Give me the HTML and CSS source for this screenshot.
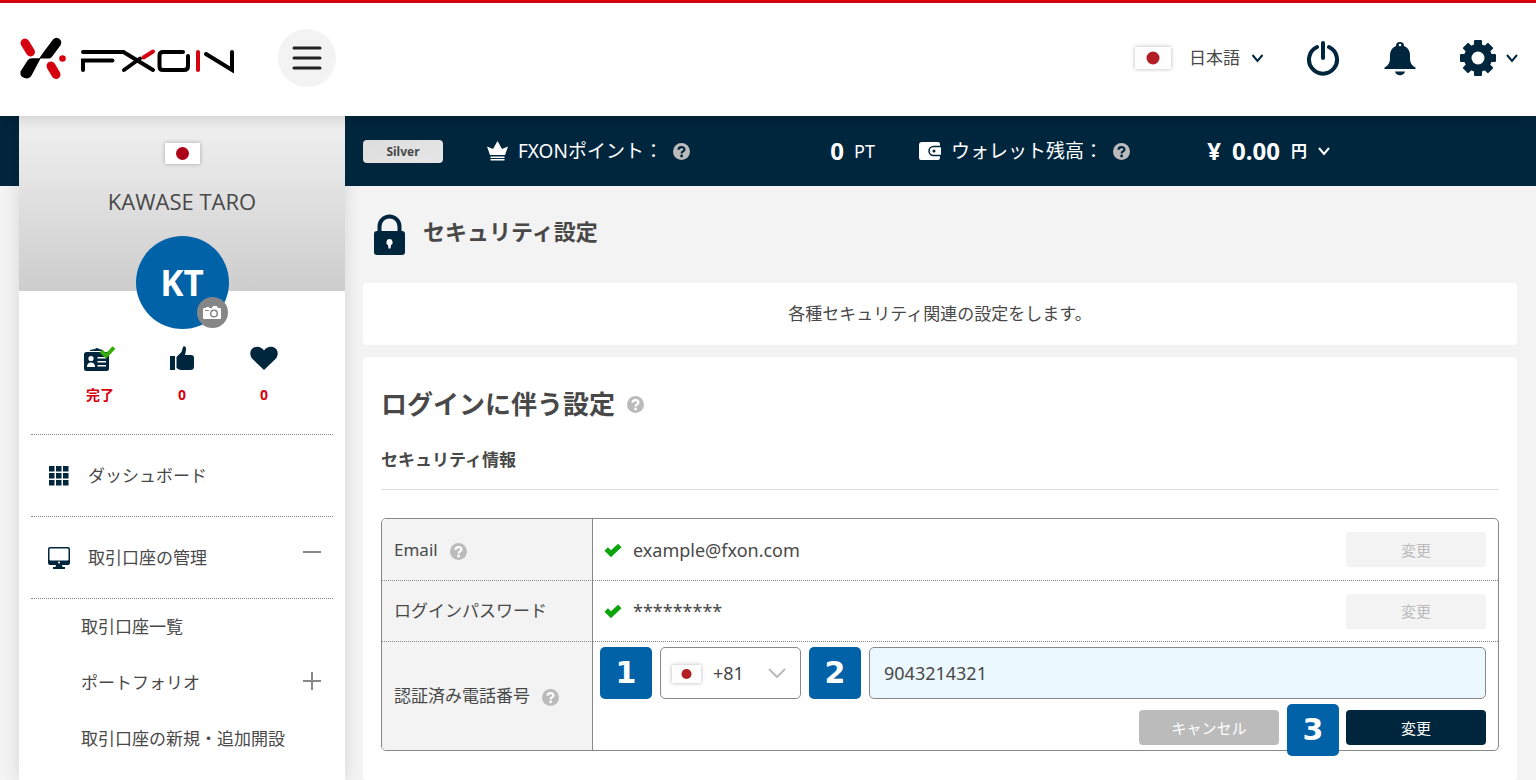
FILE: index.html
```html
<!DOCTYPE html>
<html lang="ja">
<head>
<meta charset="utf-8">
<title>セキュリティ設定 | FXON</title>
<link rel="stylesheet" href="styles.css">
</head>
<body>
<svg class="sprite" aria-hidden="true">
  <symbol id="chevron" viewBox="0 0 12 10"><path d="M1 2l5 6 5-6" fill="none" stroke="currentColor" stroke-width="2"/></symbol>
  <symbol id="help" viewBox="0 0 17 17"><circle cx="8.500" cy="8.500" r="8.500" fill="currentColor"/><path d="M5.500 6.700C5.500 3.300 11.500 3.200 11.500 6.400c0 2.100-2.900 2-2.900 4" fill="none" stroke="var(--help-mark)" stroke-width="2.200"/><circle cx="8.600" cy="13" r="1.400" fill="var(--help-mark)"/></symbol>
  <symbol id="check" viewBox="0 0 18 14"><path d="M2.200 6l4.800 4.700L15.800 2.500" fill="none" stroke="currentColor" stroke-width="5"/></symbol>
</svg>

<header class="header">
  <a class="logo" href="#" aria-label="FXON">
    <svg width="218" height="46" viewBox="0 0 218 46" fill="none" stroke-linecap="round">
      <path d="M7 8l5.500 9M33 31l5 8.500" stroke="#d7000f" stroke-width="9"/>
      <path d="M35.200 4.300q2.800-2.800 6-.500t1.500 6.200L33.800 22q-1.300 1.500-3.500 1.500H22.500L13.800 40q-2.500 4.500-7.300 3t-4-6.500L9.500 25.500Q11 23.200 14 23.200h7.300L26 16.500z" fill="#000"/>
      <circle cx="44.500" cy="23.500" r="3.300" fill="#d7000f"/>
      <path d="M65 17h40.500L135 35M65 35V25.500h29.500M106 35l16-11.500" stroke="#000" stroke-width="4"/>
      <path d="M125.500 22.500L135 16.500" stroke="#d7000f" stroke-width="4"/>
      <path d="M165 17h-20q-3.500 0-3.500 3.500v11q0 3.500 3.500 3.500h21q4 0 4-4V21" stroke="#000" stroke-width="4"/>
      <path d="M180 17v18" stroke="#d7000f" stroke-width="4"/>
      <path d="M188 19l26 16V17" stroke="#000" stroke-width="4"/>
    </svg>
  </a>
  <button class="menu-button" type="button" aria-label="メニュー">
    <svg width="30" height="26" viewBox="0 0 30 26" stroke="#222" stroke-width="3" stroke-linecap="round"><path d="M2 3h26M2 13h26M2 23h26"/></svg>
  </button>
  <nav class="tools" aria-label="ツール">
    <button class="lang" type="button">
      <svg class="flag" width="36" height="22" viewBox="0 0 36 22"><rect width="36" height="22" fill="#fff"/><circle cx="18" cy="11" r="6.500" fill="#b11e23"/></svg>
      <span>日本語</span>
      <svg class="chevron" width="13" height="10"><use href="#chevron"/></svg>
    </button>
    <button type="button" aria-label="ログアウト">
      <svg width="34" height="36" viewBox="0 0 34 36" fill="none" stroke="#00263e" stroke-width="4" stroke-linecap="round"><path d="M17 3v15M11 7a14 14 0 1 0 12 0"/></svg>
    </button>
    <button type="button" aria-label="お知らせ">
      <svg width="32" height="36" viewBox="0 0 32 36" fill="#00263e"><path d="M12 6a4 4 0 1 1 8 0c4 1.500 6 5 6 9.500V18c0 5 2 7.500 5.500 9.500V29h-31v-1.500C4 25.500 6 23 6 18v-2.500C6 11 8 7.500 12 6zM11 31.500h10c-1 5-9 5-10 0z"/><circle cx="16" cy="5" r="1.300" fill="#fff"/></svg>
    </button>
    <button class="settings" type="button" aria-label="設定">
      <svg width="36" height="36" viewBox="-18 -18 36 36"><g fill="#00263e"><circle r="14"/><g id="teeth"><rect x="-4" y="-18" width="8" height="36" rx="1"/><rect x="-18" y="-4" width="36" height="8" rx="1"/></g><use href="#teeth" transform="rotate(45)"/></g><circle r="6.500" fill="#fff"/></svg>
      <svg class="chevron" width="12" height="10"><use href="#chevron"/></svg>
    </button>
  </nav>
</header>

<div class="layout">
  <aside class="sidebar">
    <div class="profile">
      <svg class="flag" width="35" height="21" viewBox="0 0 35 21"><rect width="35" height="21" fill="#fff"/><circle cx="17.500" cy="10.500" r="6.500" fill="#ac0018"/></svg>
      <p class="user-name">KAWASE TARO</p>
      <div class="avatar">KT
        <button class="camera" type="button" aria-label="写真を変更">
          <svg width="18" height="14" viewBox="0 0 18 14"><path d="M1 2h2V1h3v1h3l1-2h4l1 2h2q1 0 1 1v9q0 1-1 1H1q-1 0-1-1V3q0-1 1-1z" fill="#fff"/><circle cx="11" cy="7.500" r="3.300" fill="none" stroke="#868686" stroke-width="1.500"/><path d="M2 4.500h4" stroke="#868686"/></svg>
        </button>
      </div>
    </div>
    <ul class="stats">
      <li>
        <svg width="32" height="26" viewBox="0 0 32 26"><path d="M2.500 6h20Q25 6 25 8.500v14q0 2.500-2.500 2.500h-20Q0 25 0 22.500v-14Q0 6 2.500 6zM6 4l5-1q2-2 4 0l4 1v1H6z" fill="#00263e"/><circle cx="7" cy="12.500" r="2.600" fill="#fff"/><path d="M3 21q0-4.500 4-4.500t4 4.500zM13.500 11h8.500v1.500h-8.500zm0 4h8.500v1.500h-8.500zm0 4h8.500v1.500h-8.500z" fill="#fff"/><path d="M17 5l5 5 8-8.500" fill="none" stroke="#35ac0a" stroke-width="4"/></svg>
        <span>完了</span>
      </li>
      <li>
        <svg width="24" height="26" viewBox="0 0 24 26" fill="#00263e"><path d="M0 10h5v14H0zM6.500 11l5-5 1.500-5c.500-1.500 3-1 3 1.500 0 2.500-.500 4-1 6.500h6q3 0 3 3v8.500q0 3.500-3.500 3.500H11q-2 0-4.500-2z"/></svg>
        <span>0</span>
      </li>
      <li>
        <svg width="28" height="26" viewBox="0 0 28 26" fill="#00263e"><path d="M14 24L2.500 13C-1 9 0 4 3 2s8-2 11 2.500C17 0 22 0 25 2s4 7 .500 11z"/></svg>
        <span>0</span>
      </li>
    </ul>
    <nav class="side-nav" aria-label="メインメニュー">
      <a class="nav-item" href="#">
        <svg width="22" height="22" viewBox="0 0 22 22" fill="#00263e"><path d="M1 1h5.500v5.500H1zM8 1h5.500v5.500H8zM15 1h5.500v5.500H15zM1 8h5.500v5.500H1zM8 8h5.500v5.500H8zM15 8h5.500v5.500H15zM1 15h5.500v5.500H1zM8 15h5.500v5.500H8zM15 15h5.500v5.500H15z"/></svg>
        <span>ダッシュボード</span>
      </a>
      <a class="nav-item" href="#">
        <svg width="22" height="24" viewBox="0 0 22 24"><path d="M2 1h18q2 0 2 2v14q0 2-2 2h-6l.500 2H17v2H5v-2h2.500L8 19H2q-2 0-2-2V3q0-2 2-2z" fill="#00263e"/><rect x="1.500" y="2.500" width="19" height="12" rx="1" fill="#fff"/><circle cx="11" cy="16.500" r="1" fill="#fff"/></svg>
        <span>取引口座の管理</span>
        <svg class="toggle" width="20" height="24" viewBox="0 0 20 24" stroke="#888" stroke-width="2"><path d="M1 6h18"/></svg>
      </a>
      <div class="sub-nav">
        <a href="#">取引口座一覧</a>
        <a href="#">ポートフォリオ
          <svg class="toggle" width="20" height="24" viewBox="0 0 20 24" stroke="#888" stroke-width="2"><path d="M1 10h18M10 1v18"/></svg>
        </a>
        <a href="#">取引口座の新規・追加開設</a>
      </div>
    </nav>
  </aside>

  <div class="content">
    <div class="status-bar">
      <span class="rank">Silver</span>
      <div class="points">
        <svg width="21" height="20" viewBox="0 0 21 20" fill="#fff"><path d="M3 14L0 5.500l6 2.500L10.500 0 15 8l6-2.500L18 14zM3.500 15.500h14V17h-14zm0 2.500h14v1.500h-14z"/></svg>
        <span>FXONポイント：</span>
        <svg class="help" width="17" height="17"><use href="#help"/></svg>
        <strong>0</strong><span class="unit">PT</span>
      </div>
      <div class="wallet">
        <svg width="22" height="18" viewBox="0 0 22 18"><path d="M3 0h16q2 0 2 2v14q0 2-2 2H2q-2 0-2-2V3q0-3 3-3z" fill="#fff"/><path d="M22 4.500h-7.500a4.500 4.500 0 0 0 0 9H22" fill="#fff" stroke="#00263e" stroke-width="1.500"/><circle cx="15" cy="9" r="1.500" fill="#00263e"/></svg>
        <span>ウォレット残高：</span>
        <svg class="help" width="17" height="17"><use href="#help"/></svg>
        <button class="balance" type="button"><span class="amount">¥</span><span class="amount">0.00</span><span class="currency">円</span><svg width="12" height="10"><use href="#chevron"/></svg></button>
      </div>
    </div>

    <main class="main">
      <h1 class="page-title">
        <svg width="31" height="41" viewBox="0 0 31 41"><path d="M5.500 18V12.500a10 10 0 0 1 20 0V18" fill="none" stroke="#00263e" stroke-width="4"/><rect y="17" width="31" height="24" rx="3" fill="#00263e"/><path d="M15.500 25a3.200 3.200 0 0 1 1.500 6l-.500 3.500h-2L14 31a3.200 3.200 0 0 1 1.500-6z" fill="#fff"/></svg>
        <span>セキュリティ設定</span>
      </h1>
      <p class="card lead">各種セキュリティ関連の設定をします。</p>
      <section class="card settings-card">
        <h2>ログインに伴う設定<svg class="help" width="17" height="17"><use href="#help"/></svg></h2>
        <h3>セキュリティ情報</h3>
        <table class="info">
          <tr>
            <th scope="row">Email<svg class="help" width="17" height="17"><use href="#help"/></svg></th>
            <td><div class="value"><svg class="ok" width="18" height="14"><use href="#check"/></svg><span>example@fxon.com</span><button class="btn btn-disabled" type="button" disabled>変更</button></div></td>
          </tr>
          <tr>
            <th scope="row">ログインパスワード</th>
            <td><div class="value"><svg class="ok" width="18" height="14"><use href="#check"/></svg><span>*********</span><button class="btn btn-disabled" type="button" disabled>変更</button></div></td>
          </tr>
          <tr class="phone-row">
            <th scope="row">認証済み電話番号<svg class="help" width="17" height="17"><use href="#help"/></svg></th>
            <td>
              <div class="phone-fields">
                <span class="step">1</span>
                <div class="country">
                  <svg class="flag" width="29" height="18" viewBox="0 0 29 18"><rect width="29" height="18" fill="#fff"/><circle cx="14.500" cy="9" r="5" fill="#b11e23"/></svg>
                  <select aria-label="国番号"><option>+81</option></select>
                  <svg class="arrow" width="18" height="10" viewBox="0 0 18 10" fill="none" stroke="#bbb" stroke-width="2"><path d="M1 1l8 8 8-8"/></svg>
                </div>
                <span class="step">2</span>
                <input type="text" aria-label="電話番号" value="9043214321">
              </div>
              <div class="actions">
                <button class="btn btn-cancel" type="button">キャンセル</button>
                <div class="submit"><span class="step">3</span><button class="btn btn-primary" type="button">変更</button></div>
              </div>
            </td>
          </tr>
        </table>
      </section>
    </main>
  </div>
</div>
</body>
</html>
```
FILE: styles.css
```css
* { box-sizing: border-box; margin: 0; padding: 0; }

body {
  --navy: #00263e;
  --blue: #0262a8;
  --help-mark: #fff;
  display: flex;
  flex-direction: column;
  min-height: 100vh;
  background: #f3f3f3;
  color: #484848;
  font: 17px/24px "Noto Sans", "Noto Sans CJK JP", sans-serif;
}

svg { display: block; flex: none; }
button, input, select { font: inherit; color: inherit; }
button { border: 0; background: none; cursor: pointer; }
a { color: inherit; text-decoration: none; }
ul { list-style: none; }

.sprite { position: absolute; width: 0; height: 0; }
.flag { box-shadow: 0 0 4px rgba(0, 0, 0, .3); }
.help { color: #bbb; }

/* Header */
.header {
  position: relative;
  z-index: 1;
  display: flex;
  align-items: center;
  height: 116px;
  padding: 0 18px 3px;
  border-top: 3px solid #d7000f;
  background: #fff;
  box-shadow: 0 0 16px rgba(0, 0, 0, .2);
}

.menu-button {
  display: grid;
  place-items: center;
  width: 58px;
  height: 58px;
  margin-left: 42px;
  border-radius: 50%;
  background: #f3f3f3;
}

.tools { display: flex; align-items: center; gap: 44px; margin-left: auto; color: var(--navy); }
.lang, .settings { display: flex; align-items: center; }
.lang { margin-right: -2px; color: #484848; }
.lang span { margin: 0 11px 0 18px; }
.settings { gap: 10px; }
.chevron { color: var(--navy); }

/* Page columns */
.layout {
  display: grid;
  grid-template-columns: 326px 1fr;
  flex: 1;
  padding-left: 19px;
  background: linear-gradient(var(--navy) 70px, #f3f3f3 70px);
}

/* Sidebar */
.sidebar { background: #fff; box-shadow: 0 0 16px rgba(0, 0, 0, .12); }

.profile {
  display: flex;
  flex-direction: column;
  align-items: center;
  height: 175px;
  padding-top: 27px;
  background: linear-gradient(#f1f1f1, #cdcdcd);
}

.user-name { margin: 25px 0 23px; font: 22px/24px "Open Sans", sans-serif; }

.avatar {
  position: relative;
  flex: none;
  width: 93px;
  height: 93px;
  border-radius: 50%;
  background: var(--blue);
  color: #fff;
  font: bold 35px/94px "Open Sans", sans-serif;
  text-align: center;
}

.camera {
  position: absolute;
  right: 1px;
  bottom: 1px;
  display: grid;
  place-items: center;
  width: 31px;
  height: 31px;
  border-radius: 50%;
  background: #868686;
}

.stats {
  display: grid;
  grid-template-columns: repeat(3, 82px);
  justify-content: center;
  margin: 0 12px;
  padding: 55px 0 27px;
  border-bottom: 1px dotted #888;
}

.stats li {
  display: flex;
  flex-direction: column;
  align-items: center;
  gap: 11px;
  color: #d7000f;
  font-size: 14px;
  font-weight: bold;
}

.side-nav { margin: 0 12px; }

.nav-item {
  display: flex;
  align-items: center;
  gap: 18px;
  min-height: 82px;
  padding: 0 11px 0 17px;
  border-bottom: 1px dotted #888;
}

.toggle { margin-left: auto; }
.sub-nav a { display: flex; align-items: center; min-height: 56px; padding: 0 11px 0 50px; }

/* Status bar */
.status-bar {
  display: flex;
  align-items: center;
  gap: 44px;
  height: 70px;
  padding: 0 18px;
  background: var(--navy);
  color: #fff;
  font-size: 19px;
}

.status-bar .help { --help-mark: var(--navy); }

.rank {
  width: 80px;
  border-radius: 4px;
  background: linear-gradient(160deg, #ddd, #e6e6e6);
  color: #484848;
  font-size: 12px;
  font-weight: bold;
  line-height: 23px;
  text-align: center;
}

.points, .wallet { display: flex; align-items: center; gap: 10px; }
.points { width: 388px; }
.wallet { width: 411px; }
.points strong { margin-left: auto; font-size: 24px; }
.unit { font-size: 18px; }
.balance { display: flex; align-items: center; gap: 11px; margin-left: auto; font-weight: bold; }
.amount { font-size: 24px; }
.currency { font-size: 16px; }

/* Main */
.main { display: flex; flex-direction: column; gap: 12px; min-height: 594px; padding: 28px 19px 0 18px; }

.page-title {
  display: flex;
  gap: 18px;
  margin: 0 0 16px 11px;
  font-size: 22px;
  line-height: 34px;
}

.card { border-radius: 4px; background: #fff; }
.lead { padding: 18px; line-height: 26px; text-align: center; }
.settings-card { flex: 1; padding: 28px 18px; }

h2 { display: flex; align-items: center; gap: 12px; font-size: 26px; line-height: 38px; }
h3 { margin: 22px 0 28px; padding-bottom: 14px; border-bottom: 1px solid #ddd; font-size: 17px; line-height: 30px; }

/* Security table */
.info { width: 100%; border: 1px solid #888; border-radius: 5px; border-spacing: 0; }

.info th {
  width: 211px;
  height: 61px;
  padding-left: 12px;
  border-right: 1px solid #888;
  background: #f3f3f3;
  font-weight: normal;
  text-align: left;
}

.info tr:first-child th { border-top-left-radius: 4px; }
.info tr:last-child th { border-bottom-left-radius: 4px; }
.info tr + tr > * { border-top: 1px dotted #888; }
.info th .help { display: inline-block; margin-left: 12px; vertical-align: -4px; }
.info td { padding: 0 12px 0 11px; }

.value { display: flex; align-items: center; gap: 11px; font-size: 18px; }
.value .btn { margin-left: auto; }
.ok { color: #0ba50b; }

.btn { width: 140px; height: 35px; border-radius: 4px; font-size: 15px; line-height: 20px; }
.btn-disabled { background: #f3f3f3; color: #bbb; }
.btn-cancel { background: #bbb; color: #fff; }
.btn-primary { background: var(--navy); color: #fff; }

.info .phone-row td { padding: 5px 12px 5px 7px; }
.phone-fields { display: flex; gap: 8px; }

.step {
  flex: none;
  width: 52px;
  border-radius: 5px;
  background: var(--blue);
  color: #fff;
  font: bold 30px/52px "DejaVu Sans", sans-serif;
  text-align: center;
}

.country { position: relative; flex: none; width: 141px; }
.country .flag { position: absolute; left: 12px; top: 18px; }
.country .arrow { position: absolute; right: 15px; top: 21px; pointer-events: none; }

.country select, .phone-fields input {
  width: 100%;
  height: 52px;
  border: 1px solid #888;
  border-radius: 5px;
  background: #fff;
  font-size: 18px;
}

.country select { appearance: none; padding-left: 52px; }
.phone-fields input { flex: 1; min-width: 0; padding: 0 14px; background: #ecf8ff; }

.actions { display: flex; justify-content: flex-end; gap: 67px; padding-top: 11px; }
.submit { position: relative; }
.submit .step { position: absolute; right: 147px; top: -6px; }
```
